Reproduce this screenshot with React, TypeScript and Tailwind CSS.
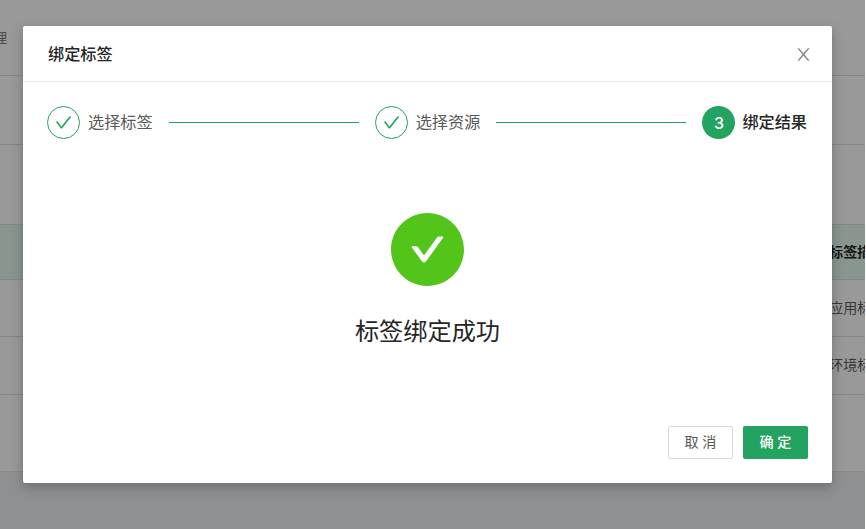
import React from "react";

const CHECK =
  "M912 190h-69.9c-9.8 0-19.1 4.5-25.1 12.2L404.7 724.5 207 474a32 32 0 00-25.1-12.2H112c-6.7 0-10.4 7.7-6.3 12.9l273.9 347c12.8 16.2 37.4 16.2 50.3 0l488.4-618.9c4.1-5.1.4-12.8-6.3-12.8z";
const CLOSE =
  "M563.8 512l262.5-312.9c4.4-5.2.7-13.1-6.1-13.1h-79.8c-4.7 0-9.2 2.1-12.3 5.7L511.6 449.8 295.1 191.7c-3-3.6-7.5-5.7-12.3-5.7H203c-6.8 0-10.5 7.9-6.1 13.1L459.4 512 196.9 824.9A7.95 7.95 0 00203 838h79.8c4.7 0 9.2-2.1 12.3-5.7l216.5-258.1 216.5 258.1c3 3.6 7.5 5.7 12.3 5.7h79.8c6.8 0 10.5-7.9 6.1-13.1L563.8 512z";
const CHECK_CIRCLE =
  "M512 64C264.6 64 64 264.6 64 512s200.6 448 448 448 448-200.6 448-448S759.4 64 512 64zm193.5 301.7l-210.6 292a31.8 31.8 0 01-51.7 0L318.5 484.9c-3.8-5.3 0-12.7 6.5-12.7h46.9c10.2 0 19.9 4.9 25.9 13.3l71.2 98.8 157.2-218c6-8.3 15.6-13.3 25.9-13.3H699c6.5 0 10.3 7.4 6.5 12.7z";

function Icon({ path, className }: { path: string; className: string }) {
  return (
    <svg viewBox="64 64 896 896" fill="currentColor" className={className}>
      <path d={path} />
    </svg>
  );
}

function DoneStep({ label }: { label: string }) {
  return (
    <div className="flex flex-1 items-center">
      <div className="flex h-[33px] w-[33px] shrink-0 items-center justify-center rounded-full border border-[#22a35f] pb-px text-[#22a35f]">
        <Icon path={CHECK} className="h-[17px] w-[17px]" />
      </div>
      <span className="ml-2 shrink-0 pt-[2px] text-[16.15px] text-[#595959]">{label}</span>
      <div className="mx-4 h-px flex-1 bg-[#22a35f]" />
    </div>
  );
}

function TableRow({ text, className }: { text: string; className: string }) {
  return (
    <div className={`flex shrink-0 items-center overflow-hidden border-b border-[#868686] pl-[829px] text-[14.15px] whitespace-nowrap ${className}`}>
      {text}
    </div>
  );
}

function Backdrop() {
  return (
    <div className="flex h-full w-[865px] flex-col overflow-hidden bg-[#999999] text-[#383838]">
      <div className="flex h-[76px] shrink-0 items-center border-b border-[#868686] pt-[2px] text-[14.15px] text-[#4d4d4d]">
        <span className="-ml-[7px]">理</span>
      </div>
      <div className="h-[69px] shrink-0 border-b border-[#868686]" />
      <div className="h-20 shrink-0 border-b border-[#868686]" />
      <TableRow text="标签描述" className="h-[55px] bg-[#89958f] pt-[2px] font-bold text-[#161616]" />
      <TableRow text="应用标签" className="h-[57px] pt-[2px]" />
      <TableRow text="环境标签" className="h-[58px]" />
      <div className="h-[76px] shrink-0" />
      <div className="flex-1 border-t border-[#8b8b8c] bg-[#8f9092]" />
    </div>
  );
}

function Modal() {
  return (
    <section className="absolute top-[26px] left-[23px] flex h-[457px] w-[809px] flex-col rounded-[2px] bg-white shadow-[0_4px_12px_rgba(0,0,0,0.25)]">
      <header className="flex h-14 items-center justify-between border-b border-[#e8e8e8] pr-5 pl-[25px]">
        <h1 className="pt-[3px] text-[16.15px] font-medium text-[#262626]">绑定标签</h1>
        <Icon path={CLOSE} className="mt-px h-[17px] w-[17px] text-[#8c8c8c]" />
      </header>
      <div className="mx-6 mt-6 flex h-[33px] items-center">
        <DoneStep label="选择标签" />
        <DoneStep label="选择资源" />
        <div className="flex shrink-0 items-center">
          <div className="flex h-[33px] w-[33px] items-center justify-center rounded-full bg-[#22a35f] font-[Inter] text-base font-medium text-white">3</div>
          <span className="mr-px ml-[7px] pt-[2px] text-[16.15px] font-medium text-[#262626]">绑定结果</span>
        </div>
      </div>
      <div className="flex flex-1 flex-col items-center pt-[74px]">
        <Icon path={CHECK_CIRCLE} className="h-[73px] w-[73px] text-[#52c41a]" />
        <p className="mt-[26px] text-[24.2px] leading-[40px] text-[#262626]">标签绑定成功</p>
      </div>
      <footer className="flex justify-end gap-[10px] pr-6 pb-6 text-[14.15px]">
        <button className="h-[33px] w-[65px] rounded-[2px] border border-[#d9d9d9] text-[#595959]">取 消</button>
        <button className="h-[33px] w-[65px] rounded-[2px] bg-[#22a35f] font-medium text-white">确 定</button>
      </footer>
    </section>
  );
}

export default function App() {
  return (
    <main className="relative h-[529px] w-[866px] overflow-hidden bg-white font-[Roboto,'Noto_Sans_CJK_SC',sans-serif]">
      <Backdrop />
      <Modal />
    </main>
  );
}
